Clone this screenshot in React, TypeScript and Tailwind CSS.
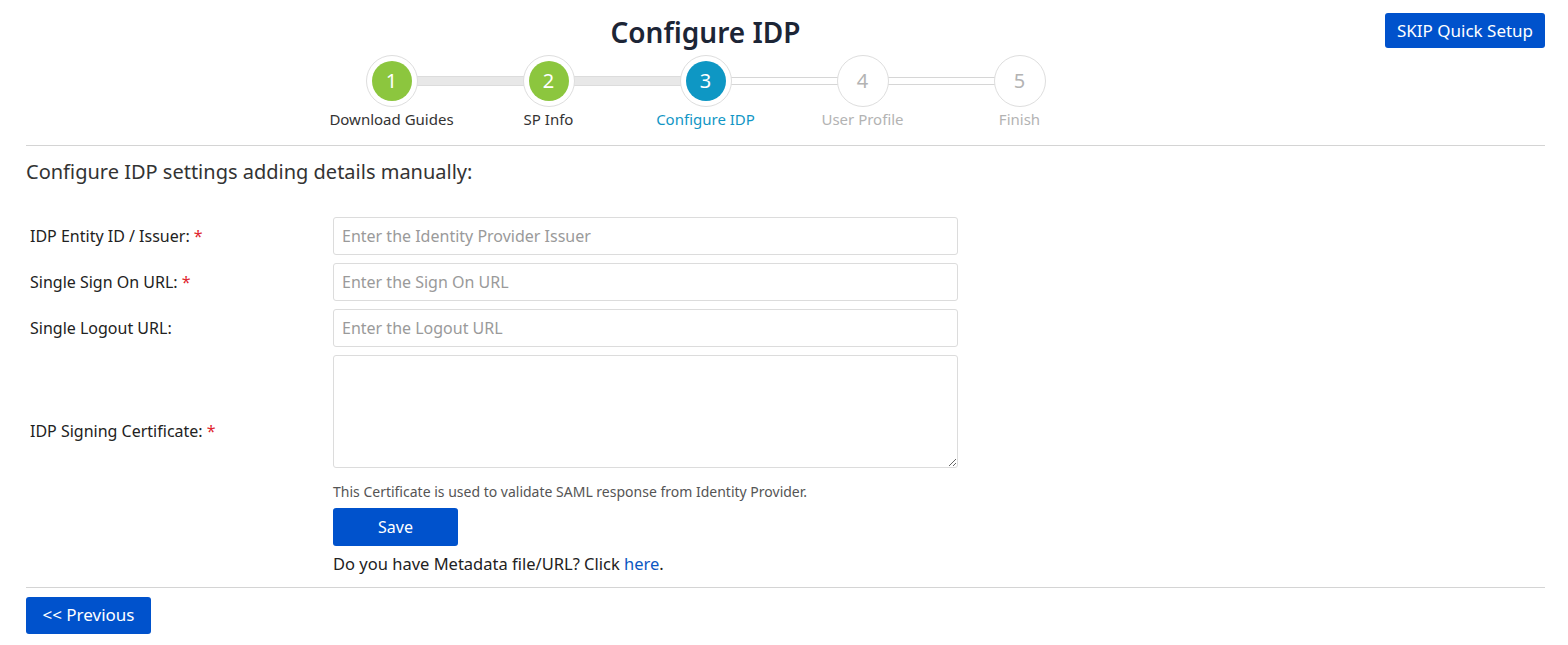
const steps = [
  { n: 1, label: "Download Guides", state: "done" },
  { n: 2, label: "SP Info", state: "done" },
  { n: 3, label: "Configure IDP", state: "active" },
  { n: 4, label: "User Profile", state: "todo" },
  { n: 5, label: "Finish", state: "todo" },
];

const fields = [
  { label: "IDP Entity ID / Issuer:", required: true, placeholder: "Enter the Identity Provider Issuer" },
  { label: "Single Sign On URL:", required: true, placeholder: "Enter the Sign On URL" },
  { label: "Single Logout URL:", required: false, placeholder: "Enter the Logout URL" },
];

function Stepper() {
  return (
    <div className="flex justify-center">
      {steps.map((s, i) => (
        <div key={s.n} className="relative flex w-[157px] flex-col items-center">
          {/* connector to next step */}
          {i < steps.length - 1 && (
            <div
              className={
                s.state === "done"
                  ? "absolute left-[78px] top-[21px] h-[10px] w-[157px] border border-[#dcdcdc] bg-[#e8e8e8]"
                  : "absolute left-[78px] top-[22px] h-[8px] w-[157px] border border-[#d6d6d6] bg-white"
              }
            />
          )}
          <div className="relative z-10 flex h-[52px] w-[52px] items-center justify-center rounded-full border border-[#dedede] bg-white">
            {s.state === "todo" ? (
              <span className="text-[20px] text-[#b3b3b3]">{s.n}</span>
            ) : (
              <div
                className={
                  s.state === "done"
                    ? "flex h-[40px] w-[40px] items-center justify-center rounded-full bg-[#8cc63e] text-[20px] text-white"
                    : "flex h-[40px] w-[40px] items-center justify-center rounded-full bg-[#0e97c4] text-[20px] text-white"
                }
              >
                {s.n}
              </div>
            )}
          </div>
          <div
            className={
              s.state === "done"
                ? "mt-[1px] text-[15px] text-[#333]"
                : s.state === "active"
                ? "mt-[1px] text-[15px] text-[#1196c5]"
                : "mt-[1px] text-[15px] text-[#b3b3b3]"
            }
          >
            {s.label}
          </div>
        </div>
      ))}
    </div>
  );
}

export default function App() {
  return (
    <div
      className="min-h-[645px] bg-white pl-[26px] pr-[23px] pt-[13px] text-[#222]"
      style={{ fontFamily: "'Segoe UI', 'Noto Sans', 'Open Sans', sans-serif" }}
    >
      {/* Header */}
      <div className="flex">
        <div className="flex-1">
          <h1 className="pt-[1px] text-center text-[28px] font-semibold leading-[36px] text-[#1c2536]">Configure IDP</h1>
          <div className="mt-[5px]">
            <Stepper />
          </div>
        </div>
        <div>
          <button className="h-[35px] w-[160px] rounded-[3px] bg-[#0052cc] text-[17px] text-white">SKIP Quick Setup</button>
        </div>
      </div>

      <hr className="mt-[14px] border-t border-[#d4d4d4]" />

      <h2 className="mt-[12px] text-[20px] leading-[28px] text-[#333]">Configure IDP settings adding details manually:</h2>

      {/* Form */}
      <div className="mt-[31px] flex flex-col gap-[8px]">
        {fields.map((f) => (
          <div key={f.label} className="flex items-center">
            <label className="w-[307px] pl-[4px] text-[16px] text-[#222]">
              {f.label} {f.required && <span className="text-[#e0262f]">*</span>}
            </label>
            <input
              className="h-[38px] w-[625px] rounded-[3px] border border-[#dcdcdc] px-[8px] text-[16px] placeholder:text-[#9a9a9a]"
              placeholder={f.placeholder}
            />
          </div>
        ))}
        <div className="flex items-start">
          <label className="w-[307px] pl-[4px] pt-[64px] text-[16px] text-[#222]">
            IDP Signing Certificate: <span className="text-[#e0262f]">*</span>
          </label>
          <textarea className="block h-[113px] w-[625px] rounded-[3px] border border-[#dcdcdc] px-[8px] py-[6px]" />
        </div>
      </div>

      <div className="ml-[307px]">
        <p className="mt-[14px] text-[14px] leading-[19px] text-[#555]">
          This Certificate is used to validate SAML response from Identity Provider.
        </p>
        <button className="mt-[7px] h-[38px] w-[125px] rounded-[3px] bg-[#0052cc] text-[16px] text-white">Save</button>
        <p className="mt-[7px] text-[16.5px] leading-[22px] text-[#222]">
          Do you have Metadata file/URL? Click <a className="text-[#0b57c2]" href="#">here</a>.
        </p>
      </div>

      <hr className="mt-[12px] border-t border-[#d4d4d4]" />

      <button className="mt-[9px] h-[37px] w-[125px] rounded-[3px] bg-[#0052cc] text-[17px] text-white">
        &lt;&lt; Previous
      </button>
    </div>
  );
}
